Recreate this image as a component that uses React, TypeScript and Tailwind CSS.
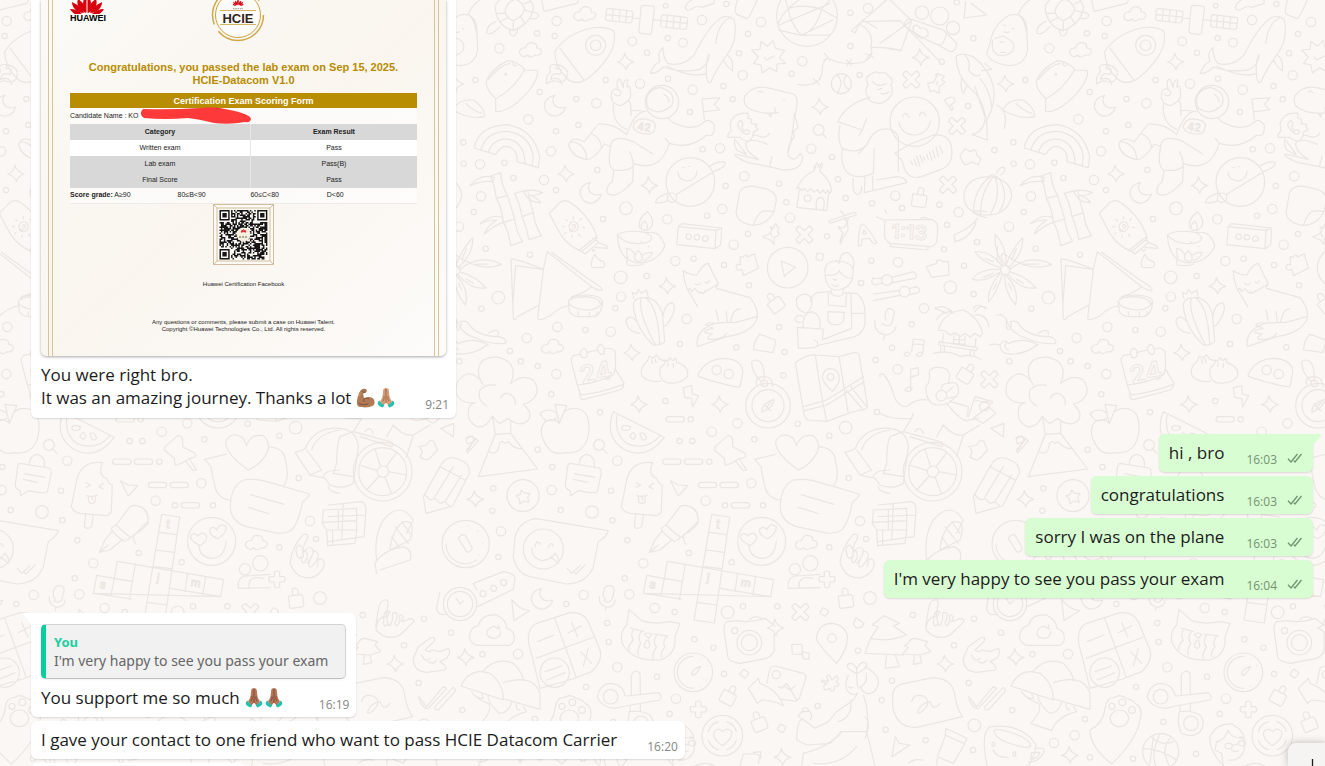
import clsx from 'clsx'
import type { ReactNode } from 'react'

/* wallpaper: x, y, radius */
const dots = [
  [617, 17, 7], [799, 12, 8], [1224, 25, 14], [1171, 38, 8], [290, 63, 14], [231, 100, 8], [284, 108, 8],
  [118, 145, 14], [517, 124, 13], [561, 158, 8], [623, 114, 8], [669, 128, 13], [726, 60, 14], [903, 66, 14],
  [864, 102, 8], [837, 160, 8], [1027, 184, 14], [1171, 138, 8], [995, 221, 8], [848, 226, 14], [46, 240, 8],
  [239, 276, 8], [349, 297, 8], [409, 310, 14], [437, 240, 8], [540, 251, 14], [624, 236, 8], [698, 269, 14],
  [790, 258, 8], [818, 298, 8], [690, 336, 8], [205, 358, 14], [288, 394, 8], [355, 375, 8], [273, 454, 14],
  [10, 427, 8], [11, 491, 8], [60, 493, 14], [133, 488, 8], [160, 534, 8], [252, 540, 14], [412, 510, 8],
  [288, 570, 8], [63, 589, 14], [41, 636, 8], [498, 625, 19], [429, 657, 8], [622, 658, 14], [728, 448, 8],
  [780, 445, 14], [853, 529, 14], [797, 558, 8], [787, 627, 14], [741, 647, 8], [1054, 446, 14], [1116, 471, 8],
  [957, 551, 8], [979, 607, 8], [990, 653, 14], [1134, 538, 8], [1157, 594, 8], [1236, 610, 8], [864, 702, 8],
  [821, 734, 14], [1101, 709, 8], [646, 783, 14], [701, 776, 8], [792, 795, 8], [867, 856, 8], [77, 746, 8],
  [210, 764, 8], [482, 832, 19], [560, 828, 8], [1234, 782, 8], [1203, 849, 8], [115, 893, 19], [483, 890, 14],
  [1199, 225, 8], [64, 926, 8], [292, 981, 14], [376, 990, 8], [200, 1014, 14], [150, 1053, 8], [452, 995, 14],
  [466, 925, 8], [680, 957, 14], [660, 1032, 8], [182, 1084, 8], [233, 1098, 8], [289, 1122, 14], [274, 1183, 8],
  [420, 1237, 8], [616, 1203, 8], [829, 1042, 8], [974, 1056, 8], [957, 981, 8], [970, 1126, 8], [1247, 1080, 8],
  [832, 1270, 14], [755, 1295, 14], [692, 1258, 8], [659, 1323, 8], [697, 1323, 8], [748, 1385, 8], [874, 1450, 14],
  [737, 1502, 14], [795, 1516, 8], [909, 1516, 8], [883, 1318, 8], [1013, 1271, 8], [1108, 1307, 8], [1157, 1283, 19],
  [1251, 1236, 8], [1166, 1434, 8], [1200, 1563, 14], [1218, 1617, 8], [1108, 1642, 8], [100, 1465, 8], [97, 1532, 8],
  [233, 1349, 8], [277, 1401, 8], [275, 1470, 14], [302, 1530, 8], [396, 1536, 19], [457, 1561, 8], [453, 1472, 8],
  [472, 1382, 14], [502, 1621, 8], [550, 1690, 14], [494, 1735, 8], [686, 1659, 8], [815, 1687, 8], [123, 1594, 14],
  [115, 1671, 8], [1490, 7, 8], [1540, 115, 8], [1445, 185, 8], [1524, 318, 8], [1603, 450, 8], [1306, 587, 14],
  [1326, 624, 8], [1438, 614, 8], [1496, 637, 14], [1461, 675, 8], [1551, 726, 8], [1452, 748, 8], [1647, 680, 14],
  [1314, 787, 14], [1512, 797, 8], [1471, 862, 19], [1541, 882, 8], [1392, 925, 14], [1355, 973, 8], [1296, 1043, 8],
  [1313, 1108, 14], [1648, 1084, 8], [319, 1812, 8], [371, 1785, 14], [508, 1783, 14], [584, 1824, 14], [644, 1836, 8],
  [803, 1837, 19], [849, 1819, 8], [952, 1819, 8], [1230, 1794, 19], [703, 1918, 8], [760, 1943, 8], [442, 1869, 8],
  [446, 1926, 8], [67, 1963, 8], [174, 1962, 14], [472, 2002, 14], [591, 2030, 8], [792, 2022, 8], [648, 2096, 14],
  [378, 2061, 8], [7, 2130, 8], [629, 2142, 8], [1073, 2118, 8], [1194, 1952, 8], [1265, 2101, 8], [1277, 2189, 8],
  [1358, 1845, 8], [1542, 1856, 8], [1623, 1898, 8], [1482, 1936, 8], [1296, 2042, 8], [1526, 2049, 8],
  [1397, 2221, 8], [1543, 2176, 19], [1539, 2250, 8], [225, 2157, 8], [194, 2206, 14], [132, 2229, 14],
  [240, 2272, 8], [369, 2276, 8], [460, 2166, 8], [558, 2262, 8],
]

const sparkles = [
  [497, 184], [1080, 319], [318, 520], [568, 555], [622, 857], [516, 1057], [537, 1212], [780, 1212], [46, 1496],
  [1382, 171], [1637, 250], [1456, 1990], [17, 1971], [180, 2264], [947, 1882], [967, 2270],
]

const clouds = [[375, 44], [212, 152], [278, 1042], [1040, 1630]]
const crosses = [[1033, 704], [1354, 239], [1491, 378], [1464, 554], [1588, 1138], [1021, 1836]]
const pluses = [[1101, 1738], [715, 2128]]
const locks = [[1378, 596, 8], [1157, 1798, -8], [945, 910, -38], [1518, 1122, 32], [806, 2088, 28], [896, 2168, -22]]
const moons = [[286, 317], [393, 578], [247, 1796]]
const pills = [[645, 1258], [635, 1385], [700, 1385], [742, 1455], [807, 1455], [841, 1516]]
const squares = [[1079, 770, 10], [1093, 1836, 30], [853, 2021, 35], [965, 2185, 30]]

const outlines = [
  /* turtle, envelope, satellite */
  'M105 20Q110 80 160 92Q215 70 221 20Q205 -20 165 -22Q120 -15 105 20ZM135 35Q140 55 160 62Q190 50 194 25Q180 0 165 -2Q140 5 135 35M107 40L136 40M118 66L143 53M160 92L160 62M195 72L182 50M218 38L194 30M210 5L191 12M108 64Q80 75 80 98Q92 110 120 80M148 90Q150 108 160 108Q170 105 173 88M220 37Q238 38 235 50Q228 60 212 55',
  'M243 -10L252 34L350 10Q358 5 352 -10M444 25L514 33Q520 34 519 41L516 63Q515 69 509 69L444 62Q436 61 437 54L439 31Q440 25 444 25ZM460 27L457 63M480 30L477 66M500 32L497 68M438 44L518 51M550 16L577 18Q584 19 583 26L575 96Q574 104 567 103L543 100Q536 99 537 92L543 23Q544 16 550 16ZM519 54L540 56M580 59L602 61M608 44L677 52Q684 53 683 60L680 82Q679 89 673 88L608 81Q601 80 602 73L604 50Q605 44 608 44ZM622 46L619 82M642 48L639 84M662 50L659 86M603 62L682 70',
  /* whale */
  'M609 142Q608 170 623 190Q672 202 703 163Q740 90 772 62Q800 38 823 60Q835 120 800 165Q765 215 753 245Q743 255 740 230Q735 190 747 163Q748 190 720 208Q665 220 610 201Q590 222 571 220Q580 195 600 184Q590 160 609 142ZM808 54Q775 70 767 130M620 198Q690 235 738 221M790 181Q800 200 817 213Q822 180 802 165M676 24Q680 35 694 28Q710 15 725 22L762 10L763 -5M676 24Q678 5 710 -8',
  'M835 -8Q820 35 830 43L860 56Q868 56 895 -8',
  /* globe, seal */
  'M950 48A91 91 0 1 0 1132 48A91 91 0 1 0 950 48M972 -12L985 25Q1030 10 1084 28L1132 55M985 25Q965 45 955 70M985 25Q990 70 1024 106L955 90M1024 106Q1070 90 1084 28L1120 -12M1024 106L1110 105M957 75L1110 10M1024 106L1118 60M1035 -15L985 25',
  'M875 150L900 148L903 124L922 139L939 122L947 145L974 151L958 173L977 190L951 192L950 215L929 203L907 219L903 195L880 190L895 171ZM912 171L919 180L943 168',
  /* kite */
  'M1197 72L1205 65L1320 62L1440 185M1197 72Q1245 95 1232 143Q1280 140 1323 152M1197 72L1285 -5L1355 62L1323 152L1280 145M1205 65L1174 92L1186 98L1197 72M1260 130L1355 62M1218 65L1250 85M1232 143Q1245 170 1210 186Q1150 200 1104 174Q1085 185 1087 213Q1080 265 1012 253M1094 160L1104 174L1092 180M1112 178L1108 183M1160 180L1175 195M1175 177L1160 198M1215 160L1240 172M1235 158L1218 180M1060 236L1078 253M1080 238L1060 250',
  /* tennis ball, magnifiers */
  'M1114 251A30 30 0 1 0 1174 251A30 30 0 1 0 1114 251M1130 224Q1155 245 1132 278M1160 225Q1140 250 1168 270M1060 390A16 16 0 1 0 1092 390A16 16 0 1 0 1060 390M1088 402L1099 414M401 1335A16 16 0 1 0 433 1335A16 16 0 1 0 401 1335M429 1348L441 1360',
  /* rocket */
  'M284 155Q320 100 395 84Q440 78 462 94Q470 130 445 170Q410 220 373 242Q340 256 320 234Q285 200 284 155ZM300 145L373 242M377 136A30 30 0 1 0 437 136A30 30 0 1 0 377 136M391 136A16 16 0 1 0 423 136A16 16 0 1 0 391 136M293 194Q260 190 272 215Q255 230 260 252Q275 240 285 243Q320 255 322 220M293 194Q315 200 322 215M293 194Q280 210 297 205Q310 210 300 223Q275 215 272 238Q300 228 305 253',
  /* hat */
  'M79 242Q95 205 143 182Q175 185 195 210L233 212Q235 250 175 305Q130 340 107 334L107 296Q75 265 79 242ZM85 238Q120 195 150 190M107 296Q160 270 193 210M134 223A3 3 0 1 0 140 223A3 3 0 1 0 134 223M160 188A4 4 0 1 0 170 195',
  /* rainbow */
  'M43 444Q55 378 140 374Q220 385 239 470L235 503L171 485M43 444L107 464Q125 430 150 442Q175 455 171 485M62 450Q80 392 145 394Q210 405 220 470L216 498M85 457Q100 412 148 418Q195 430 195 492',
  /* bamboo */
  'M30 557Q60 520 103 532L100 545Q65 540 30 557M92 528L122 518Q125 560 143 587L164 657Q170 700 188 724L152 737Q145 690 130 667Q125 620 109 595Q105 560 92 528M109 595L143 587M130 667L164 657M60 672Q95 640 128 652L130 667Q105 675 73 702Q80 680 110 660Q80 660 60 672M163 580L203 570Q210 610 220 638Q225 680 245 707L206 719Q200 680 186 650Q180 610 163 580ZM186 650L220 638M190 575Q215 565 247 578Q225 590 205 585Q230 590 242 608Q210 610 192 578',
  /* astronaut */
  'M460 310Q455 370 500 388M482 317Q515 300 512 285L510 262Q508 255 500 262L504 240Q490 235 490 263L480 237Q465 240 475 270Q460 260 455 278Q448 310 482 317M475 270Q487 275 480 285Q470 292 462 282M513 347L512 310L506 302M513 347L513 332Q535 330 558 335M556 306A50 50 0 1 0 656 306A50 50 0 1 0 556 306M565 325Q545 275 600 262Q650 275 636 315Q600 350 565 325M612 283Q627 292 627 306M527 365Q540 350 575 362Q592 370 583 390Q575 410 535 397Q510 385 527 365M550 334Q520 345 500 404Q465 370 415 372L373 425Q335 405 326 435Q335 470 378 478Q400 482 433 432L452 440Q440 500 462 510L457 545Q435 560 442 580Q470 600 518 545L520 490Q600 520 628 430Q690 450 740 405Q765 415 763 375Q745 350 727 370Q715 382 685 382Q640 375 625 355M395 402Q420 410 425 442M333 425Q375 430 380 475M452 440Q455 400 520 425L578 462M508 455Q520 470 520 510M462 510Q500 515 518 500M616 415L628 430M733 358L726 297L780 293L763 313L779 330L731 335',
  /* planet */
  'M618 546A73 73 0 1 0 764 546A73 73 0 1 0 618 546M654 516Q655 540 682 543Q710 540 711 513M669 503L673 503M685 499L688 499M622 593A14 14 0 1 0 650 593A14 14 0 1 0 622 593M648 584L763 514Q800 500 795 487Q780 482 749 498M622 580Q590 590 586 607Q600 612 625 602',
  /* dinosaur */
  'M872 328Q845 315 855 287Q880 255 920 263L1000 282Q1015 290 1010 320L1005 350L1014 383L1000 395L1003 410L990 430Q980 450 985 468Q1005 490 1020 460Q1035 470 1020 495Q1000 515 960 508L928 500L865 488M872 328Q905 345 954 337M945 322L945 340M925 340L932 350L935 339M895 275Q900 272 908 277M971 301L974 301M1003 340Q1000 400 985 455M862 338Q868 345 862 354L875 358L873 370L890 374L887 380L895 388L880 397L878 408L888 405Q915 420 929 400M862 340Q820 335 810 372L813 393Q800 405 804 412L840 412Q865 435 878 410M840 362Q830 370 835 380Q850 405 865 403L869 393L859 389L852 393L845 380L849 375L846 363ZM857 430Q870 410 922 433M857 430Q855 455 895 478L825 462Q820 470 865 488M857 460L825 418Q820 430 830 450L860 465M936 470L928 500',
  /* hut */
  'M1010 565Q1030 525 1062 513Q1060 490 1067 505Q1068 475 1078 503Q1085 480 1087 498L1079 513Q1110 540 1115 570L1110 580L1103 570L1096 580L1089 570L1080 580L1072 568L1062 577L1053 566L1043 575L1033 565L1024 572L1018 563ZM1018 570L1010 622L1100 632L1106 580M1033 595A10 10 0 1 0 1053 595A10 10 0 1 0 1033 595M1069 628Q1065 592 1083 592Q1098 595 1090 630',
  /* sticker, pins, letters */
  'M838 580Q850 550 895 562Q950 570 949 600L942 635Q920 675 880 676Q835 670 828 640ZM880 676Q890 645 905 635Q920 630 942 635M930 680L936 690L928 702L909 710Q925 718 932 720L942 733L943 712Q965 705 953 695L957 683L948 678Q955 670 944 672L940 685ZM932 697L936 710',
  'M1107 663Q1108 670 1115 668L1188 645Q1190 637 1183 637L1112 660ZM1140 635Q1150 633 1155 655Q1175 690 1150 710Q1140 735 1140 732Q1140 715 1150 700Q1130 680 1137 680Q1155 695 1165 655M1195 738Q1195 680 1207 672Q1215 670 1249 725Q1250 735 1240 730L1228 715L1207 717L1203 737ZM1209 702L1212 690L1220 702Z',
  /* man with the phone */
  'M1223 290Q1210 270 1225 255Q1210 230 1235 222Q1245 210 1260 220Q1275 212 1285 228Q1305 240 1292 255Q1305 275 1285 297Q1265 315 1245 308Q1228 305 1225 292M1238 245Q1255 265 1280 250M1253 270L1265 265M1262 280Q1275 285 1287 275M1230 292Q1160 310 1133 365L1207 390L1220 355M1196 408L1208 388M1140 375Q1130 420 1147 445Q1190 465 1220 435Q1235 395 1265 388Q1300 380 1315 410L1315 515M1147 445Q1140 500 1165 520Q1190 540 1240 520L1243 445M1196 460L1220 435M1215 530L1213 578L1340 548Q1335 530 1310 530L1250 540M1180 535Q1175 575 1190 583Q1205 585 1205 560M1238 528L1238 570',
  /* sunscreen */
  'M268 640L300 607Q318 595 335 610Q395 655 412 715L365 755Q320 735 300 700Q280 665 268 640ZM358 750L406 712L415 728L375 762ZM415 728L440 737L443 745L405 742M395 745L400 755L405 748M338 690Q325 690 328 675Q335 660 350 668Q362 685 345 694Q330 697 328 688M338 680Q338 670 346 676Q348 685 340 686M340 650L340 657M365 655L359 661M374 683L367 682M360 708L355 702M336 712L336 705M313 702L318 697M307 680L314 680M317 658L322 663',
  /* diya, radio */
  'M472 705Q475 760 505 780Q545 800 585 775Q615 750 614 735Q600 690 560 698L540 695Q490 690 472 705Q500 740 560 728Q590 715 560 700M500 782L502 795Q535 800 550 793M540 685Q530 660 562 635Q585 660 575 680Q560 700 540 685M545 682Q540 675 555 663Q567 680 560 688M535 752Q520 765 525 780Q545 790 547 775Q545 760 535 752M525 765Q515 745 500 745Q500 770 505 780M547 765Q565 755 577 758Q570 775 550 783M515 728L518 728M542 725L545 725M564 739L567 739',
  'M655 680L768 691L765 746L650 734ZM655 680L665 671L785 684L782 735L765 746M768 691L785 684M678 710A8 8 0 1 0 694 710A8 8 0 1 0 678 710M703 712A8 8 0 1 0 719 712A8 8 0 1 0 703 712M728 716A8 8 0 1 0 744 716A8 8 0 1 0 728 716',
  /* play, puzzle */
  'M922 803A61 61 0 1 0 1044 803A61 61 0 1 0 922 803M963 783L973 829L1006 801ZM840 770L850 772Q855 760 862 768L862 772L883 761L895 805L850 827L846 808Q830 815 828 800Q830 790 842 795Z',
  /* sandwich and bowl */
  'M153 777L160 955Q165 965 172 950L237 915M153 777Q165 775 250 808L167 797L158 920M250 808L262 755L395 860Q430 880 425 865Q415 855 390 840L275 757M250 808L233 955Q235 965 270 947Q300 920 325 918M395 860Q370 880 335 890M325 905Q330 885 378 885Q428 888 427 905Q420 930 378 930Q330 925 325 905M325 905L328 935Q335 948 360 950L400 950Q425 945 428 905M333 900Q335 890 378 890Q420 895 420 910M355 935L355 945M388 937L388 948M412 935L412 943M395 800Q390 785 405 762Q410 780 430 785Q440 800 425 803L398 802Z',
  /* cactus */
  'M520 920Q518 890 560 893Q600 900 608 950L614 1025Q600 1038 580 1035Q530 990 520 920M545 892Q530 930 585 1033M555 892Q595 920 599 1033M522 895L517 878L530 882L535 868L545 880L560 870L565 892M540 1000Q500 995 498 960Q510 940 530 965M608 950Q615 910 637 908Q655 925 620 975L612 978',
  /* fox */
  'M683 870Q670 840 670 812Q690 825 710 825Q730 790 745 790Q760 825 775 850Q765 855 770 865L870 893Q900 930 890 960Q870 1000 800 1010L712 1040Q705 990 765 970Q810 965 825 968L890 950M683 870L698 895L713 920M683 870L690 865L695 875L705 865L715 878L728 880L745 870L760 860L775 855M705 850Q715 860 720 850M735 845Q740 855 748 842M720 875Q730 885 735 872M765 970Q745 965 737 975L760 985Q730 990 735 998L757 1002Q740 1010 745 1018Q790 1020 800 1000M798 935L802 965M812 965Q820 925 840 927M768 930L775 962',
  /* calendar */
  'M361 1062L342 1066Q330 1075 334 1085L352 1155Q410 1150 460 1125Q470 1110 465 1055Q455 1040 432 1047M413 1050L383 1057M361 1062Q365 1080 380 1070Q385 1050 372 1044Q360 1050 361 1062M413 1050Q420 1070 433 1060Q435 1040 422 1032Q410 1040 413 1050M352 1155L362 1185Q355 1195 370 1199L480 1170Q490 1165 492 1150L465 1105M358 1185Q420 1180 490 1153',
  /* dumplings and taco */
  'M562 1083Q535 1105 548 1130Q570 1150 602 1143M562 1083L568 1068L578 1074L590 1065L600 1078L613 1082M575 1078L577 1090M585 1076L588 1088M600 1105Q595 1140 620 1148Q660 1155 682 1130Q690 1100 650 1087L648 1075L638 1082L630 1073L622 1084L615 1080Q620 1088 600 1105M625 1090L623 1100M640 1090L640 1102M715 1122Q740 1075 795 1075Q850 1080 848 1120L840 1160Q830 1165 722 1132Q713 1130 715 1122M756 1110A14 14 0 1 0 784 1110A14 14 0 1 0 756 1110M792 1122A14 14 0 1 0 820 1122A14 14 0 1 0 792 1122',
  'M670 1163L695 1157L697 1182L716 1187L698 1221L695 1196L674 1192ZM880 1050L885 1025L898 1003L915 1008L945 1020L947 1030L938 1058L888 1050Z',
  /* compass, map */
  'M857 1217A67 67 0 1 0 991 1217A67 67 0 1 0 857 1217M876 1217A48 48 0 1 0 972 1217A48 48 0 1 0 876 1217M905 1237Q905 1210 942 1198Q940 1225 905 1237M912 1212L932 1232M932 1207L918 1225M890 1155L888 1145Q890 1130 912 1130Q938 1130 938 1160M903 1150A10 10 0 1 0 923 1150A10 10 0 1 0 903 1150M905 1145Q875 1120 875 1085Q885 1075 900 1085Q915 1100 912 1145',
  'M1006 1088Q1040 1062 1066 1065L1137 1070L1185 1057Q1200 1060 1198 1070L1223 1220Q1220 1230 1200 1230L1165 1240L1100 1264L1045 1260Q1030 1250 1030 1230ZM1066 1065Q1080 1170 1100 1264M1137 1070L1165 1240M1030 1220L1100 1200L1210 1130M1033 1232L1100 1215L1213 1145M1117 1175Q1085 1145 1087 1128Q1095 1100 1120 1107Q1145 1120 1135 1150ZM1102 1131A10 10 0 1 0 1122 1131A10 10 0 1 0 1102 1131M1160 1172L1210 1230M1172 1160L1222 1222',
  /* gardener */
  'M1095 820Q1090 785 1130 783Q1175 785 1180 810L1178 835Q1165 870 1130 870Q1100 870 1095 825M1095 825Q1130 830 1138 812Q1150 835 1178 835M1138 790Q1140 755 1165 758Q1190 780 1178 810M1138 790L1127 780M1120 838Q1128 843 1130 838M1115 852Q1125 865 1135 855M1115 870L1112 880Q1130 895 1148 885L1150 870M1112 875L1070 878Q1050 890 1053 905M1150 878L1190 880Q1215 900 1215 940L1215 970Q1210 1000 1185 1010L1080 1035L1063 1043L1015 1045L1012 982L1090 987L1087 1020M1105 880L1105 915L1157 920L1160 880M1103 935L1153 937L1150 965Q1125 985 1105 965ZM1173 880L1175 985L1090 1018M1175 940L1215 940M1030 985Q1025 940 1055 935Q1085 945 1080 985M1035 938Q1005 930 1010 895Q1035 870 1055 895Q1060 925 1040 938M1025 966Q1005 970 1005 955Q1015 940 1028 950M1063 1020Q1080 1030 1070 1040',
  /* palm leaf flower */
  'M0 808Q-40 770 -20 760Q60 820 125 793Q60 760 0 808ZM40 793L85 792',
  'M1622 810A14 14 0 1 0 1650 810A14 14 0 1 0 1622 810M1638 795Q1660 740 1688 714Q1690 760 1648 800M1628 795Q1600 740 1606 704Q1640 740 1638 795M1622 802Q1570 790 1545 756Q1590 750 1625 797M1622 815Q1570 850 1536 837Q1560 805 1622 808M1627 823Q1610 880 1586 905Q1580 870 1620 820M1638 825Q1680 870 1666 915Q1635 880 1633 826M1648 815Q1700 830 1728 864Q1680 870 1643 822M1612 785L1612 740M1655 780L1670 745M1575 775L1600 785M1570 832L1600 820M1600 868L1610 850M1655 870L1645 850M1690 850L1670 838',
  /* volcano */
  'M70 1155Q40 1110 70 1080Q110 1060 145 1085Q170 1110 152 1150Q190 1120 220 1140Q240 1170 225 1190Q210 1210 190 1212Q220 1240 205 1260Q180 1285 143 1255Q125 1270 118 1270Q105 1260 97 1248Q80 1285 50 1280Q15 1260 28 1220Q35 1210 45 1207Q10 1215 -10 1185Q-20 1140 20 1122Q50 1120 67 1150M80 1218Q50 1200 60 1170Q80 1150 108 1156M122 1195Q130 1175 150 1182Q170 1195 165 1215M97 1248L106 1303L152 1300L152 1262M106 1303L55 1430L233 1407L152 1300M88 1355Q115 1370 118 1330Q128 1320 135 1330L145 1325Q165 1350 188 1345',
  /* apple, melon */
  'M298 1270L285 1213L320 1217ZM298 1270Q280 1250 255 1265Q235 1290 250 1320Q270 1370 315 1358Q380 1365 387 1290Q390 1220 335 1226Q315 1230 310 1240M290 1255Q255 1275 240 1240Q270 1220 290 1240M460 1235L613 1312Q560 1380 495 1350Q430 1310 460 1235ZM472 1242Q460 1300 500 1330Q560 1355 600 1307M487 1290Q480 1270 512 1280Q510 1295 487 1290M510 1310Q520 1285 527 1310Q520 1325 510 1310M540 1300Q555 1295 560 1315Q545 1330 540 1300',
  /* clipboard, lolly */
  'M330 1390L418 1404Q425 1410 424 1420L412 1475Q405 1483 355 1472L332 1487L330 1472Q315 1465 316 1455L323 1400Q325 1390 330 1390ZM358 1392Q360 1365 382 1363Q408 1370 403 1400M343 1421L404 1432M340 1438L382 1447',
  'M20 1316Q15 1310 35 1309L42 1312L40 1325L35 1330M28 1345Q15 1355 24 1358L55 1322L45 1315Z',
  'M578 1388Q515 1380 500 1440L484 1520Q490 1535 510 1540L590 1547Q605 1540 604 1530L607 1455Q595 1450 590 1435Q570 1430 572 1405ZM527 1543L523 1580Q530 1590 545 1580L550 1545M528 1448L542 1455L528 1462M580 1450L567 1460L580 1467M530 1487Q545 1492 562 1485M535 1490L537 1507Q548 1515 555 1505L556 1488M547 1490L547 1500',
  /* push pin, cursor, pen */
  'M765 1340L800 1310Q812 1300 818 1320L818 1340L855 1360Q862 1375 840 1375Q800 1400 795 1395L793 1375L763 1350ZM828 1385L850 1412L860 1410L840 1380M631 1442L655 1488L683 1457L655 1455Z',
  'M618 1575L660 1520Q675 1510 700 1525Q720 1550 713 1565L665 1613Q655 1610 618 1575ZM605 1583L618 1575M648 1620Q660 1620 660 1608M605 1583Q600 1595 645 1625M605 1595L585 1620L568 1657L600 1650L635 1620M568 1657L595 1635M690 1520Q715 1530 713 1555M715 1568Q700 1590 670 1605Q670 1625 678 1632',
  /* coin, chat smiley, clock */
  'M141 1487A48 48 0 1 0 237 1487A48 48 0 1 0 141 1487M184 1470L195 1480L210 1480L203 1493L208 1507L193 1503L180 1511L178 1497L168 1487L181 1483Z',
  'M445 1592L230 1556Q180 1560 165 1610L160 1670Q170 1720 210 1730L320 1752Q380 1750 400 1700L415 1625Q440 1610 445 1592ZM190 1647A60 60 0 1 0 310 1647A60 60 0 1 0 190 1647M225 1640Q230 1615 242 1633M265 1642Q275 1620 280 1640M215 1645Q215 1675 245 1682Q275 1680 285 1660M272 1670L295 1690Q300 1675 285 1660M322 1705L335 1720L360 1697M340 1715L348 1722L375 1695',
  'M-54 1632A71 71 0 1 0 88 1632A71 71 0 1 0 -54 1632M-42 1632A58 58 0 0 0 50 1680M-5 1615L20 1655Q30 1660 37 1645L15 1605Q5 1600 -5 1615M22 1578L24 1578M53 1594L55 1594M68 1628L69 1628M57 1665L58 1665',
  /* watch */
  'M-50 1812A50 50 0 1 0 50 1812A50 50 0 1 0 -50 1812M-38 1812A38 38 0 1 0 38 1812A38 38 0 1 0 -38 1812M-12 1795L0 1812L10 1803M50 1770L40 1750L130 1715Q165 1720 165 1735L160 1768L53 1820M60 1781A9 9 0 1 0 78 1781A9 9 0 1 0 60 1781M92 1765A9 9 0 1 0 110 1765A9 9 0 1 0 92 1765M122 1748A9 9 0 1 0 140 1748A9 9 0 1 0 122 1748M-40 1842Q-70 1850 -70 1820L-60 1775',
  /* crossword */
  'M755 1543L809 1551L780 1751L763 1869L702 1860L720 1751ZM748 1597L800 1604M738 1650L792 1657M730 1700L785 1706M622 1684L941 1739L932 1790L550 1780L560 1726L668 1745M622 1684L613 1735L603 1785M676 1692L658 1800M887 1730L878 1785M833 1720L825 1775M710 1807L771 1815M550 1780L665 1797M780 1765L932 1790',
  /* heart eyes */
  'M833 1624A72 72 0 1 0 977 1624A72 72 0 1 0 833 1624M867 1637Q870 1675 910 1675Q945 1670 949 1623M870 1637Q835 1620 843 1605Q855 1595 863 1608Q880 1590 890 1610Q890 1625 870 1637M923 1616Q895 1605 899 1588Q910 1575 920 1590Q930 1565 949 1580Q950 1600 923 1616',
  /* hearts message */
  'M1015 1410Q945 1360 947 1325Q965 1290 1000 1315L1010 1337Q1020 1300 1060 1307Q1085 1330 1070 1360Q1050 1395 1015 1410ZM950 1362L884 1378L903 1400Q910 1450 920 1475Q935 1500 960 1500M1077 1340Q1120 1345 1125 1375Q1140 1430 1122 1457M1000 1440Q1030 1435 1060 1442L1198 1482Q1198 1492 1178 1505Q1165 1570 1145 1590Q1120 1605 1090 1597L1010 1580Q965 1565 961 1525Q960 1460 1000 1440ZM1023 1484L1122 1513M1015 1522L1076 1541',
  /* bus, gift, hand */
  'M1155 1357Q1190 1350 1190 1335Q1220 1280 1290 1285Q1340 1290 1345 1340L1330 1450Q1300 1470 1260 1455L1245 1435L1200 1425ZM1190 1350L1235 1410L1200 1425M1205 1350Q1220 1300 1290 1290M1240 1430Q1245 1410 1290 1410M1255 1460Q1255 1475 1290 1480',
  'M1240 1530L1340 1525L1340 1590L1250 1590L1237 1570ZM1237 1567L1340 1562M1285 1528L1285 1590M1250 1592L1253 1637L1335 1630L1340 1592M1268 1592L1268 1635',
  'M1180 1603Q1145 1640 1140 1690Q1160 1740 1205 1733Q1240 1720 1243 1690Q1240 1670 1225 1680L1222 1700M1180 1603Q1200 1600 1190 1620Q1175 1640 1180 1670L1165 1675M1163 1670Q1150 1640 1170 1635L1183 1655M1175 1675Q1175 1695 1185 1685Q1200 1665 1185 1650Q1200 1635 1210 1650Q1210 1670 1190 1690M1200 1680Q1190 1705 1205 1700Q1225 1680 1225 1665Q1220 1650 1210 1655',
  'M988 1708A17 17 0 1 0 1022 1708A17 17 0 1 0 988 1708M1028 1690A23 23 0 1 0 1074 1690A23 23 0 1 0 1028 1690M985 1765Q980 1730 1010 1728L1080 1723M1018 1765Q1010 1725 1060 1735M985 1765L1080 1763',
  /* cloud sync, calculator */
  'M50 1936Q20 1925 32 1895Q38 1880 55 1877Q65 1840 110 1845Q140 1860 140 1885Q165 1890 163 1920Q155 1937 145 1936ZM118 1888Q100 1870 83 1890Q75 1910 98 1915Q122 1915 122 1895M100 1878L118 1888L115 1875',
  'M230 1870L330 1838Q370 1835 385 1865L420 1950Q430 1980 395 2015L338 2037L240 2065L206 1930Q200 1885 230 1870ZM284 1855L348 2030M228 1975L402 1911M232 1925L282 1905M325 1898L365 1877M335 1868L353 1910M362 1955L395 1990M385 1945L370 1998M240 2018A44 44 0 1 0 328 2018A44 44 0 1 0 240 2018M255 2015L305 1998M262 2040L315 2018M155 1798L162 1862L208 1832Q180 1830 155 1798',
  /* mic, cat */
  'M437 1800L430 1788Q428 1760 445 1757Q465 1755 462 1775L455 1800Q445 1812 432 1802M418 1790Q415 1815 440 1822Q465 1820 465 1800M438 1822L436 1832M507 1828L545 1862Q580 1875 630 1865L660 1870L645 1910Q650 1965 600 1980Q510 1985 485 1925Q480 1895 500 1875ZM512 1884L550 1895M582 1902L625 1908M520 1890Q510 1905 520 1920Q500 1940 508 1950M545 1895Q530 1910 542 1930Q530 1950 535 1965M590 1905Q575 1930 590 1940Q575 1960 580 1978M620 1908Q605 1930 615 1940Q600 1960 605 1970M553 1903Q560 1895 575 1903L566 1915ZM553 1940Q555 1920 565 1920Q575 1945 560 1945Z',
  /* camera, stopwatch */
  'M800 1865L835 1862Q870 1870 915 1855L945 1878M942 1902L943 1950Q935 1975 905 1978L840 1990Q805 1985 803 1970L792 1890Q792 1870 800 1865M815 1892A9 9 0 1 0 833 1892A9 9 0 1 0 815 1892M831 1928A37 37 0 1 0 905 1928A37 37 0 1 0 831 1928M844 1928A24 24 0 1 0 892 1928A24 24 0 1 0 844 1928M870 1858Q880 1845 905 1855',
  'M642 2017A58 58 0 1 0 758 2017A58 58 0 1 0 642 2017M652 2017A48 48 0 0 0 700 2065M652 2017A48 48 0 0 1 700 1969M695 2020Q700 2005 722 1999Q710 2025 697 2026ZM723 1977L724 1977M740 1997L741 1997M740 2040L741 2040M720 2058L721 2058',
  /* mushrooms, cat foot, scissors */
  'M3 2058Q30 2000 90 2020Q130 2050 130 2100ZM70 2012Q110 1970 160 1990Q190 2020 190 2042M130 2048Q220 2020 240 2080L240 2128L132 2097M35 2075Q45 2095 70 2095L65 2080M52 2092Q60 2100 85 2110Q100 2130 62 2170L125 2192Q140 2150 200 2135L190 2120M83 2085Q85 2110 118 2140Q145 2140 155 2107M170 2108Q165 2130 180 2130',
  'M286 2122Q290 2090 315 2092Q330 2080 350 2095Q370 2100 375 2110Q400 2120 390 2160Q380 2220 305 2292Q240 2240 240 2190Q280 2170 286 2122M297 2119A9 9 0 1 0 315 2119A9 9 0 1 0 297 2119M327 2107A10 10 0 1 0 347 2107A10 10 0 1 0 327 2107M356 2130A10 10 0 1 0 376 2130A10 10 0 1 0 356 2130M300 2155A28 25 0 1 0 356 2155A28 25 0 1 0 300 2155',
  'M497 2118L465 2125Q420 2120 412 2090Q420 2050 455 2050Q490 2055 495 2087L500 2088L595 2078Q610 2090 600 2100L497 2118ZM430 2090A22 22 0 1 0 474 2090A22 22 0 1 0 430 2090M514 2085L514 2025Q525 2005 540 2020L541 2083M510 2115L510 2135Q545 2130 570 2145Q590 2170 570 2195Q545 2215 515 2200Q500 2180 508 2135M541 2112L541 2132M521 2170A22 22 0 1 0 565 2170A22 22 0 1 0 521 2170',
  'M398 2255A54 54 0 1 0 506 2255A54 54 0 1 0 398 2255M425 2210Q450 2240 490 2225M430 2212L420 2290M450 2201Q420 2260 440 2305M400 2245Q460 2250 500 2280M480 2215Q450 2250 480 2300',
  /* woman, heart coin */
  'M640 2298Q595 2250 600 2210Q620 2170 665 2172Q700 2190 702 2215L690 2210M620 2225L615 2250L635 2260L640 2298M620 2225Q640 2225 655 2190Q660 2215 702 2215L703 2250Q690 2285 655 2280M645 2238A11 8 0 1 0 667 2238A11 8 0 1 0 645 2238M685 2230A11 8 0 1 0 707 2230A11 8 0 1 0 685 2230M667 2236L685 2232M665 2250Q675 2258 685 2252M700 2300Q740 2280 765 2300',
  'M726 2207A61 61 0 1 0 848 2207A61 61 0 1 0 726 2207M787 2237Q755 2215 762 2195Q775 2180 788 2195Q800 2180 815 2195Q820 2215 787 2237M745 2195A44 44 0 0 1 775 2165M800 2165A44 44 0 0 1 829 2195M829 2220A44 44 0 0 1 800 2249M775 2249A44 44 0 0 1 745 2220',
  /* reply arrow, photo, map pin */
  'M865 2065L895 2035L900 2050L925 2062Q960 2085 970 2117Q940 2100 905 2100L892 2110ZM920 2050L930 2005Q935 1998 945 1998L1030 2020Q1040 2025 1037 2035L1018 2095Q1010 2105 1000 2103L965 2098M937 2024A12 12 0 1 0 961 2024A12 12 0 1 0 937 2024M955 2060L965 2065L980 2050L1010 2100M975 2060L990 2070L1005 2058',
  'M1130 1990Q1070 1930 1069 1915Q1075 1870 1115 1870Q1160 1875 1163 1915Q1160 1950 1130 1990ZM1103 1915A13 13 0 1 0 1129 1915A13 13 0 1 0 1103 1915M995 1933L1025 1933L1028 1964L997 1962ZM1025 1955L1048 1960L1047 1978L1030 1976ZM882 2262L900 2265L895 2290M882 2262L850 2262L840 2298M882 2262L880 2258L902 2255L902 2275',
  'M1188 1853L1205 1865L1212 1870L1205 1882L1188 1884L1180 1872ZM1565 1208L1582 1203L1589 1217L1580 1232L1562 1230L1558 1217Z',
  /* snow star */
  'M1105 2045L1100 2030Q1107 2020 1112 2032L1115 2040L1130 2028Q1140 2035 1128 2045L1135 2050Q1140 2060 1125 2058L1122 2070Q1112 2080 1110 2065L1095 2070Q1085 2060 1100 2050L1085 2045Q1080 2035 1105 2045',
  /* woman with the bow */
  'M1190 2020Q1160 2010 1162 1995Q1175 1980 1190 2005Q1205 1980 1220 1990Q1225 2005 1190 2020ZM1190 2005Q1190 2060 1195 2065M1165 2025Q1150 2060 1165 2075Q1175 2090 1192 2080L1180 2100L1130 2135L1105 2165L1065 2185M1215 2000Q1270 2030 1250 2065Q1235 2090 1210 2075L1200 2060Q1225 2050 1218 2020M1210 2085Q1230 2140 1220 2195L1140 2195M1165 2060Q1170 2066 1178 2062M1065 2185L1025 2155Q1010 2170 1010 2220L1040 2235L1110 2230M1020 2150L1015 2150Q1020 2130 1050 2135Q1060 2150 1050 2160M1025 2135Q1035 2110 1048 2135M1172 2100Q1180 2150 1135 2165M1110 2230L1145 2195M1145 2195Q1110 2240 1030 2260L1025 2298M1060 2290Q1140 2300 1190 2240M1220 2195L1245 2298M1215 2150Q1235 2170 1215 2215',
  /* small figures on the right edge of the tile */
  'M1366 38A20 20 0 1 0 1406 38A20 20 0 1 0 1366 38M1412 48A27 27 0 1 0 1466 48A27 27 0 1 0 1412 48M1459 84A20 20 0 1 0 1499 84A20 20 0 1 0 1459 84M1332 77Q1335 55 1355 58L1450 90L1490 130Q1490 155 1470 155L1435 135M1332 77Q1400 125 1440 135Q1450 135 1460 100M1384 115Q1350 95 1362 77Q1375 72 1380 85Q1400 80 1405 100Q1405 112 1384 115M1517 5L1512 54L1580 45L1533 10',
  'M1590 130Q1600 70 1650 45Q1690 35 1700 80L1703 150Q1695 195 1650 197Q1590 190 1580 160ZM1675 45Q1685 10 1725 -10M1680 48Q1695 60 1702 110M1598 120Q1592 150 1610 163Q1640 175 1660 150Q1665 130 1650 120L1630 108L1605 115M1632 95Q1640 100 1648 95M1630 75L1638 78M1657 85L1662 88M1620 125Q1628 130 1632 125M1622 157L1638 157',
  'M1488 170Q1500 155 1540 170Q1590 210 1600 260Q1610 310 1580 360L1582 420L1535 403Q1570 400 1577 350Q1565 290 1530 265Q1490 225 1488 170ZM1505 235Q1500 270 1510 280L1522 255M1575 190L1595 208L1565 212M1545 260Q1560 310 1575 350M1515 165Q1535 190 1525 210Q1545 235 1560 225M1560 235Q1590 270 1595 320',
  'M1290 365A74 74 0 1 0 1438 365A74 74 0 1 0 1290 365M1328 350Q1335 330 1348 352M1378 348Q1388 325 1397 348M1317 368Q1325 405 1365 405Q1405 400 1411 363M1305 460L1345 435L1420 405Q1470 400 1475 445Q1480 490 1450 505L1385 530Q1350 540 1335 510L1325 480ZM1352 483L1358 495M1362 478L1370 498M1370 468L1380 500M1380 465L1388 487M1390 470L1394 480M1400 462L1405 478M1408 455L1416 482M1418 450L1425 475M1428 440L1435 470M1438 437L1448 460',
  'M1403 250L1420 247L1433 225L1425 228L1432 220L1453 230L1445 240L1455 247L1438 260L1437 280L1422 272L1410 275ZM1432 245L1430 255M1453 300Q1475 285 1484 295Q1488 310 1470 315L1480 325L1475 332ZM1500 468L1515 445L1530 455Q1550 440 1550 465L1562 475L1555 495L1535 485Q1520 500 1510 490Z',
  'M1512 585Q1520 530 1590 530Q1655 540 1655 590Q1640 650 1570 645Q1510 635 1512 585ZM1590 530Q1540 570 1540 640M1600 530Q1560 580 1562 645M1605 530Q1625 590 1590 643M1620 540Q1650 590 1615 640M1580 635L1540 632Q1540 645 1580 653M1585 530Q1600 515 1620 540M1610 520Q1620 495 1635 505Q1635 520 1620 525M1552 655Q1540 680 1482 705L1485 725Q1530 715 1548 668',
  'M1275 660L1415 658Q1435 665 1433 690L1430 725Q1425 740 1410 740L1290 730Q1272 720 1273 700ZM1290 730L1292 740L1403 750L1405 740M1380 658Q1395 645 1408 660M1280 640L1275 628M1270 660L1250 650',
  'M1399 800L1430 790L1430 782L1443 780L1448 785L1465 785L1467 825L1415 832Z',
  'M1265 840A16 16 0 1 0 1297 840A16 16 0 1 0 1265 840M1297 832L1360 815Q1375 825 1365 835L1297 848M1318 875A16 16 0 1 0 1350 875A16 16 0 1 0 1318 875M1350 865L1370 860Q1385 870 1375 878L1350 884M1265 835L1238 835Q1230 850 1245 855L1265 850M1318 872L1240 882M1320 886L1240 902',
  /* beach house, chillies */
  'M1435 990Q1450 935 1510 930Q1555 950 1568 1000L1560 1010L1545 1000L1530 1012L1515 1000L1500 1010L1485 998L1470 1005L1455 993ZM1450 1000L1448 1030M1548 1015L1545 1040M1437 1025L1552 1043L1550 1052L1437 1035ZM1482 1005L1480 1030L1515 1033L1515 1008M1498 1005L1498 1030M1480 1018L1515 1020M1442 1038L1442 1055M1453 1038L1453 1055M1532 1050L1530 1070M1543 1050L1542 1070M1420 1060Q1470 1050 1500 1070Q1530 1060 1562 1078M1475 940Q1455 910 1425 925Q1440 930 1460 940M1475 935Q1440 935 1430 960M1545 935Q1560 910 1580 925M1545 945Q1580 940 1587 980M1540 925Q1555 905 1575 925M1460 925Q1475 930 1480 940',
  'M1610 945Q1630 940 1640 960Q1635 980 1645 990Q1660 980 1650 965Q1670 960 1675 970Q1700 1010 1770 1010Q1795 1020 1785 1030Q1740 1035 1700 1015Q1650 1000 1640 960M1588 1035Q1605 1030 1620 1035Q1630 1015 1645 1030Q1690 1010 1735 1035M1620 1035Q1620 1065 1660 1062Q1700 1060 1730 1035M1640 1025L1633 1040L1645 1050M1735 1000Q1760 985 1765 995L1765 1005',
  'M1278 960Q1270 940 1285 925Q1305 925 1302 945L1295 970Q1285 985 1265 970M1245 960Q1240 1000 1280 1005Q1305 1000 1308 980M1275 1005L1270 1020M1355 1055L1360 1017L1393 1020L1388 1062M1358 1032L1392 1034M1332 1065Q1340 1050 1350 1060Q1345 1075 1332 1065M1368 1065Q1380 1050 1388 1062Q1380 1075 1368 1065M1352 1170L1352 1108L1375 1103L1375 1125L1355 1130M1335 1170Q1345 1155 1357 1165Q1350 1182 1335 1170',
  /* person in the wheelchair */
  'M1260 1130Q1255 1120 1270 1122Q1290 1145 1300 1180Q1310 1220 1340 1220Q1370 1195 1400 1200M1405 1200Q1390 1160 1405 1150L1410 1130Q1400 1105 1430 1102Q1465 1100 1470 1125L1465 1150Q1500 1140 1495 1180Q1470 1215 1440 1215Q1410 1215 1405 1195M1428 1187A16 16 0 1 0 1460 1187A16 16 0 1 0 1428 1187M1445 1170Q1440 1150 1465 1150M1460 1178L1480 1160M1463 1195L1490 1190M1460 1210Q1500 1260 1520 1262L1555 1255M1470 1205L1525 1220Q1525 1235 1520 1250M1540 1255L1585 1220L1608 1240L1570 1270ZM1525 1250L1545 1190L1598 1205L1595 1212L1545 1200M1430 1310L1450 1275Q1480 1310 1510 1305L1560 1275M1260 1240Q1290 1260 1355 1255L1360 1240M1355 1255L1330 1295M1330 1295L1290 1310Q1280 1330 1280 1390L1270 1420L1330 1430M1330 1295L1440 1325Q1455 1330 1445 1340L1350 1310M1510 1305L1490 1370M1365 1295Q1380 1275 1390 1300',
  'M1330 1415A88 88 0 1 0 1506 1415A88 88 0 1 0 1330 1415M1346 1415A72 72 0 1 0 1490 1415A72 72 0 1 0 1346 1415M1402 1415A17 17 0 1 0 1436 1415A17 17 0 1 0 1402 1415M1412 1400L1395 1348M1428 1400L1460 1358M1436 1415L1490 1425M1425 1430L1445 1482M1408 1428L1370 1470M1402 1412L1348 1395',
  'M1592 1285L1632 1270L1630 1310ZM1527 1340L1550 1335L1560 1320L1572 1325L1582 1350L1560 1375L1550 1380L1530 1372L1537 1355ZM1670 1350L1695 1320L1685 1308L1668 1318L1672 1332L1690 1325M1540 1490L1590 1400Q1610 1360 1650 1380Q1680 1390 1678 1420L1628 1518L1548 1540ZM1590 1400L1665 1440M1545 1485L1560 1500L1575 1495L1590 1510L1605 1505L1620 1520M1575 1490L1630 1400M1605 1505L1655 1425',
  'M1255 1515L1355 1505Q1367 1510 1368 1530L1362 1610L1255 1625M1255 1550L1367 1545M1300 1510L1295 1620',
  'M1400 1680Q1390 1610 1420 1560Q1470 1500 1510 1560L1490 1600M1395 1690Q1420 1650 1480 1640Q1510 1650 1500 1680L1410 1710M1395 1690L1400 1720M1440 1650Q1445 1590 1480 1565Q1520 1560 1500 1620ZM1455 1580L1495 1630M1475 1565L1500 1600M1445 1610L1470 1645',
  /* trees, rocker hand, pen drawing */
  'M1236 1875L1272 1847L1318 1870L1300 1878L1340 1905L1318 1912Q1280 1925 1232 1915L1255 1880ZM1232 1915L1215 1960L1330 1965M1280 1965L1275 2005L1318 2000L1305 1963M1345 1930Q1350 1915 1365 1915L1403 1925L1395 1935L1412 1955L1380 1965L1328 1962L1345 1942L1332 1937ZM1363 1967L1360 1993L1385 1988L1380 1965',
  'M1425 1800Q1440 1795 1430 1835L1428 1850Q1400 1850 1398 1890Q1430 1925 1470 1905L1512 1865Q1510 1850 1490 1860L1475 1865L1480 1850Q1465 1835 1470 1860Q1460 1890 1455 1870Q1465 1850 1460 1840Q1445 1830 1448 1855Q1440 1890 1435 1870Q1425 1855 1440 1835Q1420 1830 1422 1855L1420 1870Q1425 1885 1435 1870M1425 1800Q1410 1800 1405 1830L1397 1880',
  'M1525 1940L1560 1915Q1580 1905 1572 1925L1545 1950Q1560 1960 1565 1950L1590 1955L1615 1945Q1625 1955 1610 1975L1590 1985Q1615 2000 1605 2010L1550 2017Q1510 2015 1510 1975ZM1535 1965Q1545 1990 1560 1975M1555 1985Q1570 1995 1580 1980',
  'M1298 2085Q1300 2055 1335 2050L1420 2033Q1480 2035 1485 2090Q1490 2125 1508 2150L1370 2182Q1310 2185 1298 2120ZM1355 2105Q1360 2080 1390 2088Q1410 2100 1400 2120Q1380 2145 1372 2138Q1380 2110 1410 2105Q1420 2135 1440 2110M1526 2090L1550 2120L1600 2060L1610 2065L1555 2125Q1545 2130 1530 2105ZM1575 2120L1630 2062Q1640 2070 1635 2075L1585 2130Q1570 2130 1575 2120',
  'M1306 2210L1296 2270L1350 2235L1318 2230ZM1458 2185L1520 2215L1515 2230L1480 2290L1432 2270L1455 2210ZM1455 2205L1512 2230M1432 2275L1430 2295M1345 2290Q1360 2275 1390 2280',
  /* mug */
  'M-60 2180Q40 2170 78 2235Q70 2290 40 2310M-60 2180Q-90 2200 -68 2300M-48 2195Q-50 2185 -25 2190Q60 2210 62 2238Q55 2245 35 2240Q-40 2225 -48 2195M75 2245Q110 2240 100 2260Q80 2290 55 2285M65 2258L90 2257Q85 2275 62 2278ZM-50 2250Q-40 2275 -5 2272M-53 2233A4 4 0 1 0 -47 2233A4 4 0 1 0 -53 2233M10 2262A4 4 0 1 0 16 2262A4 4 0 1 0 10 2262',
  /* coffee beans */
  'M-17 385Q-5 330 -40 315M-22 330Q-5 295 40 300Q80 330 72 350Q30 360 -22 330M18 310Q35 330 65 340',
]

const Doodles = () => (
  <>
    {dots.map(([x, y, r]) => (
      <circle key={`${x}-${y}`} cx={x} cy={y} r={r} />
    ))}
    {sparkles.map(([x, y]) => (
      <path key={`${x}-${y}`} transform={`translate(${x} ${y})`} d="M-3-25Q0-6 25 2Q6 6 1 25Q-6 6-25 2Q-6-3-3-25Z" />
    ))}
    {clouds.map(([x, y]) => (
      <path
        key={`${x}-${y}`}
        transform={`translate(${x} ${y})`}
        d="M-24 17Q-40 8-30-4Q-22-10-16-8Q-10-30 12-22Q20-18 18-8Q36-8 31 7Q26 16 13 13Q0 25-10 13Q-16 20-24 17Z"
      />
    ))}
    {crosses.map(([x, y]) => (
      <path
        key={`${x}-${y}`}
        transform={`translate(${x} ${y}) rotate(45)`}
        d="M-8-28Q0-33 8-28V-8H28Q33 0 28 8H8V28Q0 33-8 28V8H-28Q-33 0-28-8H-8Z"
      />
    ))}
    {pluses.map(([x, y]) => (
      <path
        key={`${x}-${y}`}
        transform={`translate(${x} ${y})`}
        d="M-8-22Q0-28 8-22V-8H22Q28 0 22 8H8V22Q0 28-8 22V8H-22Q-28 0-22-8H-8Z"
      />
    ))}
    {locks.map(([x, y, a]) => (
      <path
        key={`${x}-${y}`}
        transform={`translate(${x} ${y}) rotate(${a})`}
        d="M-18-12H18Q22-10 22-6V20Q20 25 16 25H-16Q-21 25-21 20V-7Q-22-12-18-12ZM-7-12V-28Q0-40 10-28V-12"
      />
    ))}
    {moons.map(([x, y]) => (
      <path
        key={`${x}-${y}`}
        transform={`translate(${x} ${y})`}
        d="M-2-31Q-34-24-33 4Q-24 34 4 31Q26 24 31 4Q8 12-4-4Q-12-18-2-31Z"
      />
    ))}
    {pills.map(([x, y]) => (
      <rect key={`${x}-${y}`} x={x - 27} y={y - 8} width="55" height="16" rx="8" />
    ))}
    {squares.map(([x, y, a]) => (
      <rect key={`${x}-${y}`} x={x - 10} y={y - 10} width="20" height="20" rx="3" transform={`rotate(${a} ${x} ${y})`} />
    ))}
    {outlines.map((d) => (
      <path key={d.slice(0, 24)} d={d} />
    ))}
    <g fontFamily="Inter, sans-serif" strokeWidth="2.600">
      <text x="532" y="392" fontSize="32" transform="rotate(8 550 380)">42</text>
      <text x="360" y="1144" fontSize="76" fontWeight="600" transform="rotate(-12 410 1120)">24</text>
      <text x="1294" y="718" fontSize="60" fontWeight="600" transform="rotate(3 1350 700)">1:13</text>
      <text x="768" y="1585" fontSize="38" transform="rotate(8 775 1575)">t</text>
      <text x="740" y="1745" fontSize="34" transform="rotate(8 745 1735)">j</text>
      <text x="842" y="1760" fontSize="34" transform="rotate(8 855 1750)">m</text>
      <text x="568" y="1765" fontSize="34" transform="rotate(8 578 1755)">a</text>
    </g>
  </>
)

const Wallpaper = () => (
  <svg className="absolute inset-0 size-full" aria-hidden="true">
    <defs>
      <g id="doodles" transform="scale(0.33333)" fill="none" stroke="#ece6e2" strokeWidth="3.6" strokeLinecap="round" strokeLinejoin="round">
        <Doodles />
      </g>
    </defs>
    <use href="#doodles" x="-90" />
    <use href="#doodles" x="460" />
    <use href="#doodles" x="1010" />
  </svg>
)

const Muscle = () => (
  <svg viewBox="0 0 20 20" className="inline-block size-5 align-[-4px]" role="img" aria-label="flexed biceps">
    <path
      d="M6 1.2c1.6-.8 4-.6 4.6.4.5 1.2-.2 2.800-1.500 3.300l-1.800.4c-.1 2 .4 4 1.300 5.300 2.500-2.400 7-2.300 9 .4 1.700 2.500 1.300 5.600-1.200 7.100-3.500 1.700-9.800 1.700-14 .4C.5 17 .6 13.500 1.500 10 2.500 6 3.800 2.500 6 1.200Z"
      fill="#b07a56"
    />
    <path d="M6 3.500c1 .8 2.200.8 3.500.4M8.600 10.600c-.8.7-1 1.700-.8 2.800M8.600 10.600c1.500-.8 2.800-.8 4 .2M3 15.500c3 1.600 6.500 1.700 9 .3" fill="none" stroke="#7d4f36" strokeWidth="1" strokeLinecap="round" />
    <path d="M3.500 8c.6-2 1.200-3 2-4" fill="none" stroke="#cc9a76" strokeWidth="1" strokeLinecap="round" />
  </svg>
)

const Pray = ({ dark }: { dark?: boolean }) => (
  <svg viewBox="0 0 20 20" className="inline-block size-5 align-[-4px]" role="img" aria-label="folded hands">
    <path
      d="M9.800.5c-1.500-.5-2.400.3-2.600 2L6.600 8c-.2 1.500-1.200 3.500-2.600 5.300l3 4.700 3-3.300 3 3.300 3-4.700C14.600 11.500 13.600 9.500 13.400 8l-.6-5.500C12.600.8 11.500 0 9.800.5Z"
      fill={dark ? '#b4775a' : '#d39c76'}
    />
    <path d="M10 1v13.500M8 8.500c.3 1.500.1 3-.7 4.200M12 8.500c-.3 1.500-.1 3 .7 4.200" fill="none" stroke={dark ? '#7a452f' : '#9a6446'} strokeWidth=".9" strokeLinecap="round" />
    <path d="M3.300 12.600c-1.300 1-1.700 2.300-1.500 3.700 1 1.500 2.600 2.500 4.700 3.200 1-.6 1.500-1.500 1.500-2.500-1.800-.9-3.500-2.300-4.700-4.400ZM16.700 12.600c1.300 1 1.700 2.300 1.500 3.700-1 1.500-2.600 2.500-4.700 3.200-1-.6-1.500-1.500-1.500-2.500 1.800-.9 3.500-2.300 4.700-4.400Z" fill="#22c0ae" />
  </svg>
)

const Ticks = () => (
  <svg viewBox="0 0 16 12" className="w-4 h-3 mb-1 shrink-0" role="img" aria-label="delivered">
    <path d="M1 6.700L4 10L10.500 2M6.700 8.600L8 10L14.500 2" fill="none" stroke="#71936f" strokeWidth="1.300" />
  </svg>
)

const petals = [
  'M16 13C9 10 6 5 8-1C13 2 16 7 16 13Z',
  'M14 13C7 13 2 8 2 2C8 5 12 8 14 13Z',
  'M12 14C7 16 3 14 0 9C5 9 9 11 12 14Z',
  'M16.500 13C12 6 12 0 16.500-5Z',
]

const Petals = () => (
  <g fill="#d7000f">
    {petals.map((d) => (
      <path key={d} d={d} />
    ))}
    <g transform="translate(34 0) scale(-1 1)">
      {petals.map((d) => (
        <path key={d} d={d} />
      ))}
    </g>
  </g>
)

const Badge = () => (
  <svg viewBox="0 0 54 44" className="w-[54px] h-11" role="img" aria-label="HCIE">
    <circle cx="27" cy="15" r="25.500" fill="none" stroke="#cda94b" strokeWidth="1.500" strokeDasharray="62 8 74 16" />
    <circle cx="27" cy="15" r="22.500" fill="#fdfcf8" stroke="#c9a13c" strokeWidth="1" />
    <g transform="translate(21.500 1) scale(.33)">
      <Petals />
    </g>
    <path d="M22 8.700H32" stroke="#8d827c" strokeWidth=".9" strokeDasharray="1.500 .8" />
    <path d="M9 10.500H45M9 24.500H45" stroke="#c9a13c" strokeWidth=".8" />
    <text x="27" y="22.500" textAnchor="middle" fontFamily="Liberation Sans, sans-serif" fontWeight="700" fontSize="13" fill="#33231f">
      HCIE
    </text>
  </svg>
)

const QR_SIZE = 33
const finder = (x: number, y: number) => {
  const d = Math.max(Math.abs(x - 3), Math.abs(y - 3))
  return d === 3 || d < 2
}
const isDark = (x: number, y: number) => {
  if (x < 8 && y < 8) return finder(x, y)
  if (x > QR_SIZE - 9 && y < 8) return finder(QR_SIZE - 1 - x, y)
  if (x < 8 && y > QR_SIZE - 9) return finder(x, QR_SIZE - 1 - y)
  return Math.abs(Math.sin(x * 127.1 + y * 311.7) * 43758.5) % 1 > 0.4
}
const cells = Array.from({ length: QR_SIZE * QR_SIZE }, (_, i) => [i % QR_SIZE, Math.floor(i / QR_SIZE)])
const qrPath = cells
  .filter(([x, y]) => isDark(x, y))
  .map(([x, y]) => `M${x} ${y}h1v1h-1z`)
  .join('')

const QrCode = () => (
  <svg viewBox="0 0 61 61" className="size-[61px] mx-auto" role="img" aria-label="QR code">
    <path d="M.5.5H60.500V60.500H.500ZM4 4H57V57H4ZM.5.5L4 4M60.500.500L57 4M.5 60.500L4 57M60.500 60.500L57 57" fill="#fdfaf5" stroke="#cdb795" strokeWidth=".9" />
    <path d={qrPath} transform="translate(6.500 6) scale(1.450 1.500)" fill="#161616" />
    <circle cx="30.500" cy="30.500" r="7" fill="#f6efdf" />
    <g transform="translate(27.500 26) scale(.18)">
      <Petals />
    </g>
    <path d="M26 33H35" stroke="#6d5d4a" strokeWidth="1" strokeDasharray="2 1" />
  </svg>
)

const results = [
  { category: 'Written exam', result: 'Pass' },
  { category: 'Lab exam', result: 'Pass(B)' },
  { category: 'Final Score', result: 'Pass' },
]

const Certificate = () => (
  <div className="mx-[10px] px-[7px] rounded-b-md overflow-hidden shadow-[0_1px_3px_rgba(0,0,0,0.35)] bg-linear-to-br from-[#fbfaf6] via-[#faf5ef] to-[#fdfcfa] text-[#222] font-['Liberation_Sans',sans-serif]">
    <div className="border-x border-[#d8c596] px-[3px]">
      <div className="border-x border-[#d8c596] px-[17px]">
        <div className="flex h-[61px]">
          <div className="w-[37px]">
            <svg viewBox="0 0 34 14" className="w-[34px] h-[14px]" aria-hidden="true">
              <Petals />
            </svg>
            <p className="text-[9px] leading-[9px] font-bold text-black">HUAWEI</p>
          </div>
          <div className="ml-[104px]">
            <Badge />
          </div>
        </div>
        <h2 className="text-center text-[11px] leading-[13px] font-bold text-[#b88c00]">
          Congratulations, you passed the lab exam on Sep 15, 2025.
          <br />
          HCIE-Datacom V1.0
        </h2>
        <div className="relative mt-[6px]">
          <table className="w-full table-fixed border-collapse text-[7px] leading-[8px] text-center bg-white/60">
            <colgroup>
              <col className="w-[31%]" />
              <col className="w-[21%]" />
              <col className="w-[22%]" />
              <col className="w-[26%]" />
            </colgroup>
            <thead>
              <tr className="h-[15px] bg-[#b98d02] text-white text-[9px]">
                <th colSpan={4}>Certification Exam Scoring Form</th>
              </tr>
              <tr className="h-4">
                <td colSpan={4} className="text-left">
                  Candidate Name : KO
                </td>
              </tr>
              <tr className="h-4 bg-[#d8d8d8]">
                <th colSpan={2} className="border-r border-[#e6e6e6]">
                  Category
                </th>
                <th colSpan={2}>Exam Result</th>
              </tr>
            </thead>
            <tbody>
              {results.map(({ category, result }, i) => (
                <tr key={category} className={clsx('h-4', i ? 'bg-[#d8d8d8]' : 'bg-white')}>
                  <td colSpan={2} className="border-r border-[#e6e6e6]">
                    {category}
                  </td>
                  <td colSpan={2}>{result}</td>
                </tr>
              ))}
              <tr className="h-[15px] text-left border-b border-[#eeebe6]">
                <td>
                  <b>Score grade:</b> A≥90
                </td>
                <td>80≤B&lt;90</td>
                <td>60≤C&lt;80</td>
                <td>D&lt;60</td>
              </tr>
            </tbody>
          </table>
          {/* redacted name */}
          <svg viewBox="0 0 112 18" className="absolute left-[70px] top-[14px] w-28 h-[18px]" aria-hidden="true">
            <path d="M3 2Q30 3 60 1Q75-1 90 3Q110 7 111 12Q110 16 105 15Q90 18 74 16Q58 12 48 11Q25 13 4 11Q-2 7 3 2Z" fill="#fd3a39" />
          </svg>
        </div>
        <QrCode />
        <p className="mt-4 text-center text-[6px] leading-[7px]">Huawei Certification Facebook</p>
        <p className="mt-[31px] pb-[23px] text-center text-[6px] leading-[7px]">
          Any questions or comments, please submit a case on Huawei Talent.
          <br />
          Copyright ©Huawei Technologies Co., Ltd. All rights reserved.
        </p>
      </div>
    </div>
  </div>
)

type BubbleProps = {
  children: ReactNode
  time: string
  mine?: boolean
  tail?: boolean
  header?: ReactNode
}

const Bubble = ({ children, time, mine, tail, header }: BubbleProps) => (
  <div
    className={clsx(
      'relative w-fit rounded-md shadow-[0_1px_2px_rgba(0,0,0,0.13)]',
      mine ? 'self-end bg-[#d9fdd3]' : 'bg-white',
      tail && (mine ? 'rounded-tr-none' : 'rounded-tl-none')
    )}
  >
    {tail && (
      <svg viewBox="0 0 8 11" className={clsx('absolute top-0 w-2 h-[11px]', mine ? 'left-full' : 'right-full -scale-x-100')} aria-hidden="true">
        <path d="M0 0H7Q9 1 7 3L0 11Z" fill={mine ? '#d9fdd3' : '#fff'} />
      </svg>
    )}
    {header}
    <div className={clsx('flex items-end justify-between pl-[10px] pt-[7px] pb-2', mine ? 'gap-[22px] pr-[10px]' : 'gap-[30px] pr-[7px]')}>
      <p className="text-[17px] leading-[23px] text-[#1b1b1b]">{children}</p>
      <div className={clsx('flex items-end gap-[10px] text-xs leading-4 -mb-1', mine ? 'text-[#72926f]' : 'text-[#858585]')}>
        <time>{time}</time>
        {mine && <Ticks />}
      </div>
    </div>
  </div>
)

const Quote = () => (
  <blockquote className="mx-[10px] mt-[11px] mb-0 h-[55px] flex flex-col justify-center rounded-[5px] border border-[#d3d3d3] border-b-[#bdbdbd] border-l-[5px] border-l-[#06cf9c] bg-[#f1f1f1] pl-2 pr-[17px] shadow-xs font-['Noto_Sans',sans-serif]">
    <cite className="not-italic text-[13px] leading-[18px] font-bold text-[#1bcf9e]">You</cite>
    <p className="text-[14px] leading-[19px] text-[#666]">I'm very happy to see you pass your exam</p>
  </blockquote>
)

const sent = [
  { text: 'hi , bro', time: '16:03' },
  { text: 'congratulations', time: '16:03' },
  { text: 'sorry I was on the plane', time: '16:03' },
  { text: "I'm very happy to see you pass your exam", time: '16:04' },
]

const App = () => {
  return (
    <main className="relative h-screen overflow-hidden bg-[#fbf7f4] font-['Open_Sans','Noto_Sans',sans-serif]">
      <Wallpaper />
      <section className="relative flex flex-col gap-1 pl-[31px] pr-3">
        <div className="w-[425px]">
          <div className="rounded-b-md bg-white shadow-[0_1px_2px_rgba(0,0,0,0.13)]">
            <Certificate />
            <div className="flex items-end justify-between pl-[10px] pr-[7px] pt-[7px] pb-[9px]">
              <p className="text-[17px] leading-[23px] text-[#1b1b1b]">
                You were right bro.
                <br />
                It was an amazing journey. Thanks a lot <Muscle />
                <Pray />
              </p>
              <time className="text-xs leading-4 text-[#858585] -mb-1">9:21</time>
            </div>
          </div>
        </div>

        <div className="mt-3 flex flex-col gap-1">
          {sent.map(({ text, time }, i) => (
            <Bubble key={text} time={time} mine tail={i === 0}>
              {text}
            </Bubble>
          ))}
        </div>

        <div className="mt-[11px] flex flex-col gap-1">
          <Bubble time="16:19" tail header={<Quote />}>
            You support me so much <Pray dark />
            <Pray dark />
          </Bubble>
          <Bubble time="16:20">I gave your contact to one friend who want to pass HCIE Datacom Carrier</Bubble>
          <div className="w-[214px] h-9 rounded-md bg-white" />
        </div>
      </section>

      <button
        type="button"
        aria-label="Scroll to latest"
        className="absolute right-0 bottom-0 w-[37px] h-[23px] rounded-tl-lg bg-[#f5f4f3] shadow-[0_0_8px_rgba(0,0,0,0.25)]"
      >
        <svg viewBox="0 0 37 23" className="size-full" aria-hidden="true">
          <path d="M24.500 16V23" stroke="#1b1b1b" strokeWidth="1.300" />
        </svg>
      </button>
    </main>
  )
}

export default App
